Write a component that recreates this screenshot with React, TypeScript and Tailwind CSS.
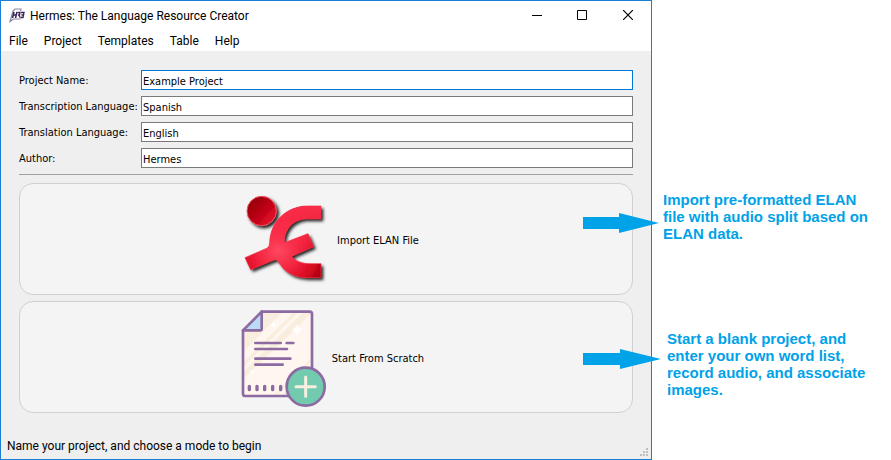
import React from "react";

const menus = ["File", "Project", "Templates", "Table", "Help"];

const fields = [
  { id: "project", label: "Project Name:", value: "Example Project", active: true },
  { id: "transcription", label: "Transcription Language:", value: "Spanish", active: false },
  { id: "translation", label: "Translation Language:", value: "English", active: false },
  { id: "author", label: "Author:", value: "Hermes", active: false },
];

function AppLogo() {
  return (
    <svg width="16" height="16" viewBox="0 0 16 16" fill="none" aria-hidden="true">
      <path d="M4 3 6 1h6l-.5 2M4 3 1 13.500l3.500-2.500h7" stroke="#8d86a3" strokeWidth="1.200" />
      <path d="M5 4 3.500 10M8 4 6.500 10M4.500 7h3" stroke="#3b2257" strokeWidth="1.500" />
      <path d="M8.500 4.500H11L10.500 7H9M10 7l1 2.500M12 4.500h3L14.500 7h-2M14.500 7l-.5 2.500h-2.500" stroke="#3b2257" strokeWidth="1.300" />
    </svg>
  );
}

function ElanIcon() {
  const figure =
    "M258 48H215C157 50 107 91 104 157Q104 169 97 174L30 203 47 239 117 210Q125 207 131 216C146 244 175 263 215 263H258V221H225C200 221 180 214 170 199L236 170 219 131 148 158C147 119 174 87 215 87H258Z";
  return (
    <svg className="size-24 shrink-0 overflow-visible" viewBox="3 3 288 288" aria-hidden="true">
      <defs>
        <radialGradient id="elan-body" gradientUnits="userSpaceOnUse" cx="130" cy="177" r="160">
          <stop offset="0" stopColor="#ff4a62" />
          <stop offset="0.450" stopColor="#f0213b" />
          <stop offset="0.700" stopColor="#d90a22" />
          <stop offset="1" stopColor="#980008" />
        </radialGradient>
        <linearGradient id="elan-top" x1="0" y1="0" x2="0" y2="1">
          <stop offset="0" stopColor="#fb2d49" />
          <stop offset="0.400" stopColor="#fb2d49" stopOpacity="0.700" />
          <stop offset="0.650" stopColor="#fb2d49" stopOpacity="0" />
        </linearGradient>
        <linearGradient id="elan-head" x1="0.100" y1="0.200" x2="0.900" y2="0.900">
          <stop offset="0" stopColor="#970009" />
          <stop offset="0.500" stopColor="#bd0014" />
          <stop offset="1" stopColor="#ed1231" />
        </linearGradient>
        <filter id="elan-shadow" x="-20%" y="-20%" width="150%" height="150%">
          <feDropShadow dx="7" dy="7" stdDeviation="4" floodColor="#000" floodOpacity="0.850" />
        </filter>
      </defs>
      <g filter="url(#elan-shadow)">
        <circle cx="80" cy="63" r="44" fill="url(#elan-head)" stroke="#f0505f" strokeWidth="3" />
        <path d={figure} fill="url(#elan-body)" />
      </g>
      <path d={figure} fill="url(#elan-top)" stroke="#f43249" strokeWidth="2" />
    </svg>
  );
}

function NewDocumentIcon() {
  return (
    <svg className="size-24 shrink-0 overflow-visible" viewBox="-12 9 288 288" aria-hidden="true">
      <defs>
        <clipPath id="sheet">
          <path d="M80 17H226Q231 17 231 22V270H24V74Z" />
        </clipPath>
      </defs>
      <g clipPath="url(#sheet)">
        <path d="M20 14H234V274H20Z" fill="#f9eddd" />
        <path d="M148 14H180L20 174V142ZM194 14H209L20 203V188ZM234 17V150L110 274H20V224Z" fill="#fff6ef" />
        <path d="M234 160V174L134 274H120Z" fill="#fff6ef" />
      </g>
      <path d="M80 17V68Q80 73 75 73H24Z" fill="#bbdcf7" />
      <g fill="none" stroke="#8c6aa2" strokeWidth="8" strokeLinecap="round" strokeLinejoin="round">
        <path d="M80 17H224Q231 17 231 24V263Q231 270 224 270H31Q24 270 24 263V73Z" />
        <path d="M80 17V68Q80 73 75 73H24" />
        <path d="M61 111H137M155 111H175M61 129H156M61 158H166M61 176H143" />
        <path d="M43 241V251M66 241V251M89 241V251M113 241V251M137 241V251" strokeWidth="10" />
      </g>
      <g fill="#fff">
        <path d="M186 54Q189 68 203 71 189 74 186 88 183 74 169 71 183 68 186 54Z" />
        <path d="M116 44Q118 54 128 56 118 58 116 68 114 58 104 56 114 54 116 44Z" />
        <path d="M51 190Q52 197 59 198 52 199 51 206 50 199 43 198 50 197 51 190Z" />
      </g>
      <circle cx="212" cy="242" r="57" fill="#72caaf" stroke="#8c6aa2" strokeWidth="8" />
      <path d="M183 242H241M212 213V271" stroke="#f9efde" strokeWidth="9" strokeLinecap="round" />
    </svg>
  );
}

function ModeButton({ icon, label }: { icon: React.ReactNode; label: string }) {
  return (
    <button
      type="button"
      className="flex h-28 w-full items-center justify-center gap-[5px] rounded-[14px] border border-[#d0d0d0] bg-[#f4f4f4] pl-[3px]"
    >
      {icon}
      <span className="pt-1">{label}</span>
    </button>
  );
}

function Arrow({ className }: { className: string }) {
  return (
    <svg className={"absolute h-5 " + className} viewBox="0 0 76 20" preserveAspectRatio="none" aria-hidden="true">
      <path d="M0 4H36V0L76 10 36 20V16H0Z" fill="#00a2e8" />
    </svg>
  );
}

export default function App() {
  return (
    <div className="flex min-h-screen bg-white font-['Roboto',sans-serif] text-black">
      <main className="flex min-w-0 flex-1 flex-col border border-[#1a7fd4] bg-[#efefef]">
        <header className="bg-white">
          <div className="flex h-[30px] items-center pl-2">
            <AppLogo />
            <h1 className="ml-[5px] text-[12px]">Hermes: The Language Resource Creator</h1>
            <div className="ml-auto flex self-start">
              <button type="button" aria-label="Minimize" className="flex h-7 w-[45px] items-center justify-center">
                <svg width="10" height="10" viewBox="0 0 10 10"><path d="M0 5.500H10" stroke="#000" /></svg>
              </button>
              <button type="button" aria-label="Maximize" className="flex h-7 w-[46px] items-center justify-center">
                <svg width="10" height="10" viewBox="0 0 10 10" fill="none"><path d="M.5.500H9.500V9.500H.5Z" stroke="#000" /></svg>
              </button>
              <button type="button" aria-label="Close" className="flex h-7 w-[46px] items-center justify-center">
                <svg width="10" height="10" viewBox="0 0 10 10"><path d="M0 0 10 10M10 0 0 10" stroke="#000" strokeWidth="1.200" /></svg>
              </button>
            </div>
          </div>
          <nav className="flex h-5 items-center gap-4 pl-2 text-[12px]">
            {menus.map((name) => (
              <button key={name} type="button">{name}</button>
            ))}
          </nav>
        </header>

        <form
          className="px-[18px] pt-[19px] font-['DejaVu_Sans_Condensed','DejaVu_Sans',sans-serif] text-[11px]"
          onSubmit={(e) => e.preventDefault()}
        >
          <div className="flex flex-col gap-1.5 border-b border-[#a0a0a0] pb-1.5">
            {fields.map((f) => (
              <div key={f.id} className="flex h-5 items-center">
                <label htmlFor={f.id} className="w-[122px] shrink-0 pt-0.5 whitespace-nowrap">{f.label}</label>
                <input
                  id={f.id}
                  type="text"
                  defaultValue={f.value}
                  className={
                    f.active
                      ? "h-5 min-w-0 flex-1 border border-[#0078d7] bg-white px-px pt-0.5 outline-none"
                      : "h-5 min-w-0 flex-1 border border-[#7a7a7a] bg-white px-px pt-0.5 outline-none"
                  }
                />
              </div>
            ))}
          </div>
          <div className="mt-2 flex flex-col gap-1.5">
            <ModeButton icon={<ElanIcon />} label="Import ELAN File" />
            <ModeButton icon={<NewDocumentIcon />} label="Start From Scratch" />
          </div>
        </form>

        <footer className="mt-auto flex h-[26px] items-center justify-between pl-1.5 text-[12px]">
          <p>Name your project, and choose a mode to begin</p>
          <svg className="mr-0.5 mb-0.5 self-end" width="9" height="9" viewBox="0 0 9 9" aria-hidden="true">
            <path d="M6 0h2v2H6zM3 3h2v2H3zM6 3h2v2H6zM0 6h2v2H0zM3 6h2v2H3zM6 6h2v2H6z" fill="#bfbfbf" />
          </svg>
        </footer>
      </main>

      <aside className="flex w-[239px] shrink-0 flex-col gap-[88px] pt-[191px] pl-[11px] font-['Liberation_Sans',sans-serif] text-[15px] leading-[17px] font-bold text-[#00a2e8]">
        <p className="relative whitespace-nowrap">
          <Arrow className="top-[22px] right-full mr-1 w-[76px]" />
          Import pre-formatted ELAN<br />file with audio split based on<br />ELAN data.
        </p>
        <p className="relative ml-1 whitespace-nowrap">
          <Arrow className="top-[19px] right-full mr-1.5 w-[78px]" />
          Start a blank project, and<br />enter your own word list,<br />record audio, and associate<br />images.
        </p>
      </aside>
    </div>
  );
}
